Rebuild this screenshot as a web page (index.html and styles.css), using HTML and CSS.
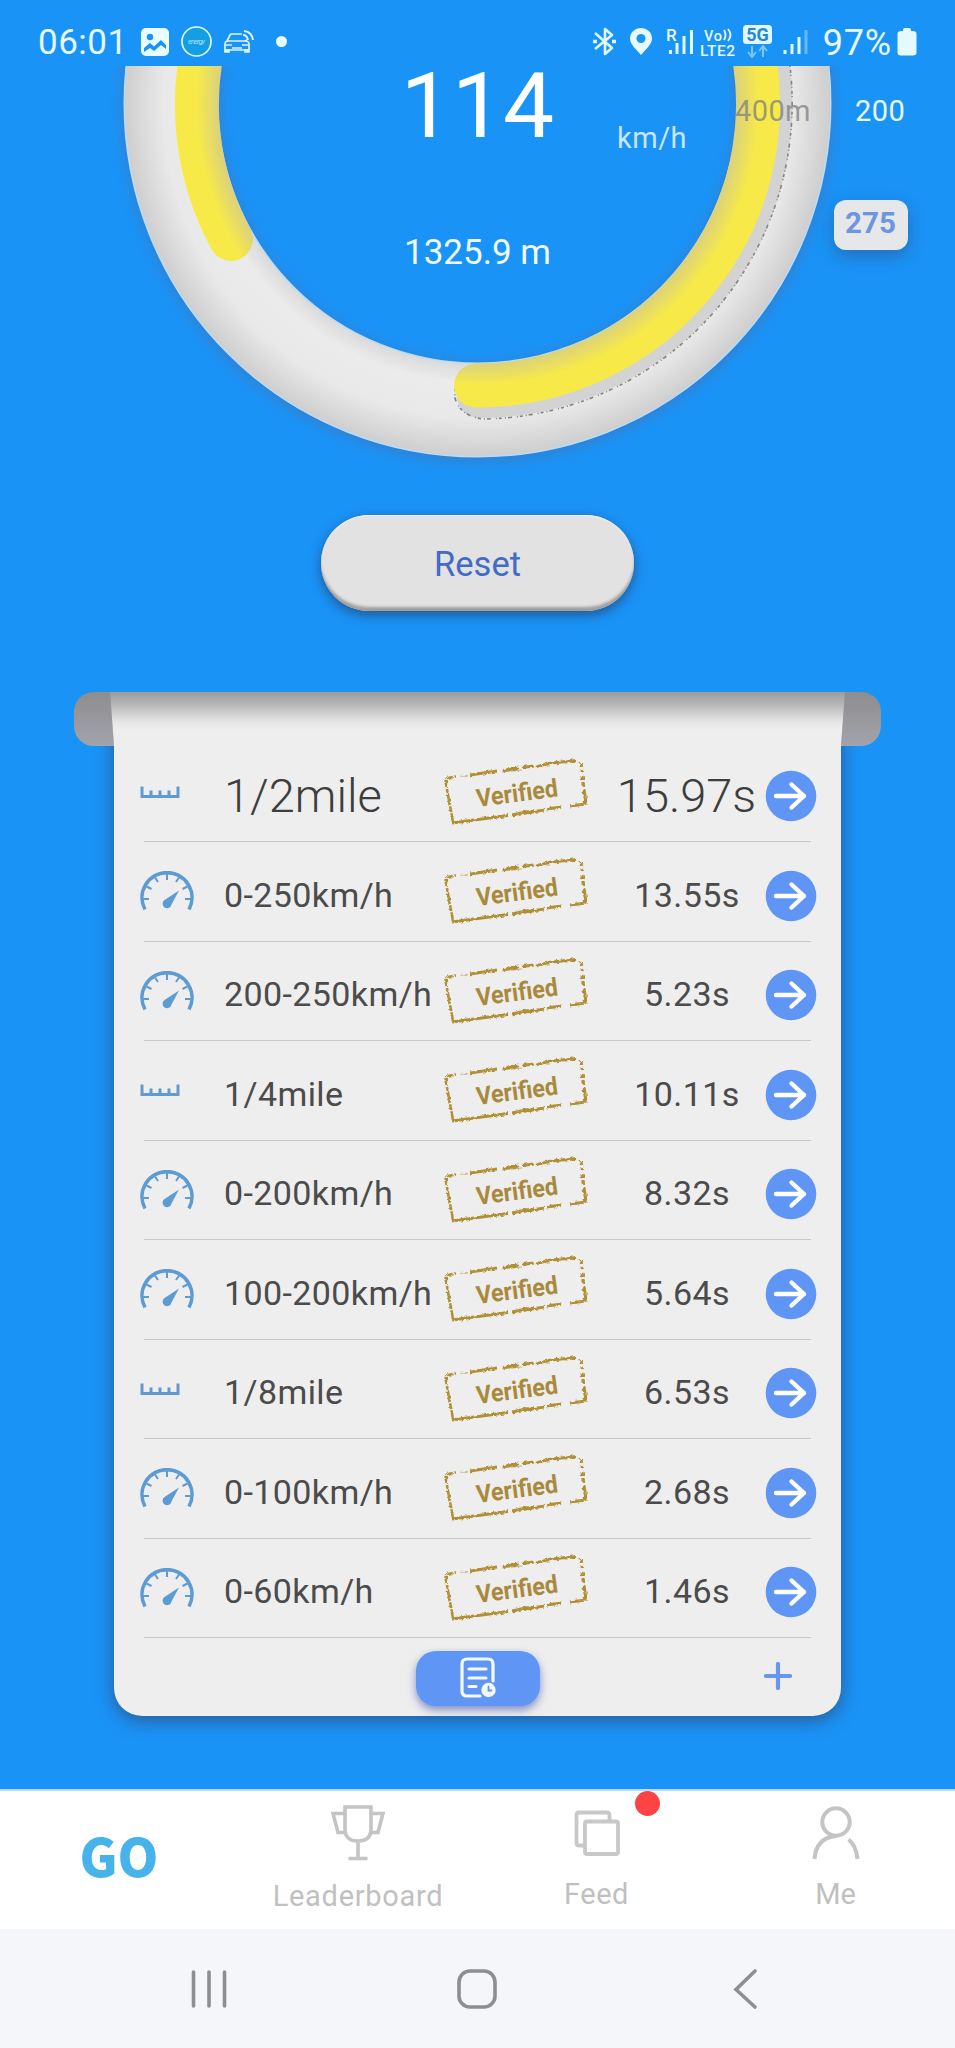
FILE: index.html
```
<!DOCTYPE html>
<html lang="en">
<head>
<meta charset="UTF-8">
<title>GO</title>
<link rel="stylesheet" href="styles.css">
</head>
<body>
<div class="statusbar">
  <span class="clock">06:01</span>
  <svg class="st-image" width="28" height="28" viewBox="0 0 28 28"><rect width="28" height="28" rx="5" fill="#e9fcff"/><circle cx="9" cy="9" r="3.200" fill="#1a93f7"/><path d="M3 20l6-5 4 3.500 7-6.500 5 5v4l-5-4-7 6-4-3-6 4z" fill="#1a93f7"/></svg>
  <svg class="st-app" width="31" height="31" viewBox="0 0 31 31"><circle cx="15.500" cy="15.500" r="14.500" fill="#149fe4" stroke="#dff8ff" stroke-width="1.700"/><text x="15.500" y="18" font-size="7.500" font-style="italic" textLength="17" text-anchor="middle" fill="#a9e0fa">energy</text></svg>
  <svg class="st-car" width="31" height="24" viewBox="0 0 31 24" fill="none" stroke="#dcf5ff" stroke-width="1.700"><path d="M4 11l3-6q.5-1 2-1h10M22 11l2-1M2 20v-6q0-3 3-3h17q4 0 4 3v6zM6 11h15M3 15h6M19 15h6M9 18h10"/><path d="M2 20h4v2H2zM22 20h4v2h-4z" fill="#dcf5ff"/><path d="M20 5q4 0 5 5M21 1q8 1 9 9" stroke-width="2"/></svg>
  <span class="st-dot"></span>
  <svg class="st-bt" width="25" height="29" viewBox="0 0 25 29" fill="none" stroke="#e2f8ff" stroke-width="2.600" stroke-linejoin="round"><path d="M3 6l17 15-7 6V2l7 6L3 22"/><path d="M1 14.500h4M20 14.500h4" stroke-width="3.500"/></svg>
  <svg class="st-pin" width="22" height="27" viewBox="0 0 22 27"><path d="M11 27C5 20 0 16 0 10.500a11 10.500 0 0 1 22 0C22 16 17 20 11 27z" fill="#e6f9ff"/><circle cx="11" cy="10.500" r="4.500" fill="#1a93f7"/></svg>
  <svg class="st-sig" width="28" height="29" viewBox="0 0 28 29" stroke="#e2f8ff" stroke-width="3"><path d="M4.500 23v4M11 16v11M18 9v18M25.500 3v24"/><text x="0" y="13.500" font-size="17" font-weight="500" stroke="none" fill="#e2f8ff">R</text></svg>
  <svg class="st-lte" width="36" height="30" viewBox="0 0 36 30" fill="#e2f8ff"><text x="4" y="13.500" font-size="14.500" font-weight="500" textLength="18">Vo</text><path d="M24 3q3 5 0 10M28 2q5 6 0 12" fill="none" stroke="#e2f8ff" stroke-width="1.900"/><text x="0" y="28.500" font-size="15.500" font-weight="500" textLength="35">LTE2</text></svg>
  <svg class="st-5g" width="29" height="34" viewBox="0 0 29 34"><rect width="29" height="19" rx="3.500" fill="#e2f8ff"/><text x="14.500" y="16" font-size="18" font-weight="700" text-anchor="middle" fill="#2588d6">5G</text><path d="M9 21v10M5 27l4 5 4-5M20 32V22M16 26l4-5 4 5" fill="none" stroke="#7cc6fb" stroke-width="2"/></svg>
  <svg class="st-sig2" width="25" height="29" viewBox="0 0 25 29" stroke="#e2f8ff" stroke-width="3"><path d="M2 23v4M9 17v10M16 10v17"/><path d="M23 3v24" stroke="#67b8fa"/></svg>
  <span class="percent">97%</span>
  <svg class="st-bat" width="20" height="28" viewBox="0 0 20 28"><path d="M6 2q0-2 2-2h4q2 0 2 2v1h2q3.500 0 3.500 3v18.500q0 3-3.500 3H4q-3.500 0-3.500-3V6q0-3 3.500-3h2z" fill="#e6f9ff"/></svg>
</div>

<!-- speed dial, coordinates are screen coordinates -->
<svg class="dial" width="955" height="420" viewBox="0 66 955 420">
  <defs>
    <radialGradient id="ring" gradientUnits="userSpaceOnUse" cx="477.500" cy="104" r="353">
      <stop offset=".735" stop-color="#dadada"/>
      <stop offset=".79" stop-color="#ebebeb"/>
      <stop offset=".89" stop-color="#e9e9e9"/>
      <stop offset="1" stop-color="#cecece"/>
    </radialGradient>
    <radialGradient id="arc" gradientUnits="userSpaceOnUse" cx="477.500" cy="104" r="303">
      <stop offset=".855" stop-color="#dbd17c"/>
      <stop offset=".93" stop-color="#f7ea48"/>
    </radialGradient>
    <filter id="blur" x="-10%" y="-10%" width="120%" height="120%"><feGaussianBlur stdDeviation="8"/></filter>
    <filter id="soft" x="-50%" y="-50%" width="200%" height="200%"><feGaussianBlur stdDeviation="9"/></filter>
  </defs>
  <circle cx="477.500" cy="106" r="306.500" fill="none" stroke="#4a6fa8" stroke-opacity=".65" stroke-width="94" filter="url(#blur)"/>
  <circle cx="477.500" cy="103.500" r="306.500" fill="none" stroke="#b9dcf8" stroke-width="95"/>
  <circle cx="477.500" cy="103.500" r="306.500" fill="none" stroke="url(#ring)" stroke-width="92"/>
  <path class="arc-shadow" d="M768 66A292 292 0 0 1 479 396"/>
  <path class="arc-noise" d="M790 66A313 316 0 0 1 483 419Q460 416 455 398V384"/>
  <path class="arc" d="M207 30A281 281 0 0 0 231 239"/>
  <path class="arc" d="M748 30A281 281 0 0 1 476 385.500"/>
  <text class="speed" x="477.500" y="137">114</text>
  <text class="unit" x="617" y="147.500">km/h</text>
  <text class="distance" x="477.500" y="264">1325.9 m</text>
  <text class="mark" x="735" y="121">400m</text>
  <text class="tick" x="855" y="121">200</text>
  <rect x="834" y="206" width="74" height="50" rx="12" fill="#24548f" fill-opacity=".6" filter="url(#soft)"/>
  <rect x="834" y="200" width="74" height="50" rx="12" fill="#e6e7e9"/>
  <text class="badge" x="870.500" y="233">275</text>
</svg>

<button class="reset">Reset</button>

<div class="sheet">
  <div class="roll"></div>
  <div class="paper">
    <ul class="results" id="results"></ul>
    <div class="paper-foot">
      <button class="history">
        <svg width="36" height="42" viewBox="0 0 36 42" fill="none" stroke="#f4faff" stroke-width="3.200" stroke-linecap="round"><path d="M20 39H7q-5 0-5-5V7q0-5 5-5h21q5 0 5 5v17"/><path d="M9 12h17M9 21h17M9 29.500h7"/><circle cx="28.500" cy="33" r="7.200" fill="#f4faff" stroke="none"/><path d="M28.500 29.500v4h3" stroke="#5f96f5" stroke-width="1.800"/></svg>
      </button>
      <svg class="plus" width="28" height="28" viewBox="0 0 28 28"><path d="M14 2v24M2 14h24" stroke="#6796ea" stroke-width="4.200" stroke-linecap="round"/></svg>
    </div>
  </div>
</div>

<div class="tabs">
  <div class="tab go">GO</div>
  <div class="tab leaderboard">
    <svg width="54" height="56" viewBox="0 0 54 56" fill="none" stroke="#c4c4c4" stroke-width="3.600"><path d="M14 2h26v22q0 12-13 12T14 24zM27 36v17M17.500 53.500h19M14 8.500H2l5 19h7M40 8.500h12l-5 19h-7"/></svg>
    <span>Leaderboard</span>
  </div>
  <div class="tab feed">
    <svg width="46" height="46" viewBox="0 0 46 46" fill="none" stroke="#c8c8c8" stroke-width="3.800"><path d="M35.500 10V5q0-2.500-2.500-2.500H4.500Q2.500 2.500 2.500 5v28q0 2.500 2.500 2.500h5"/><rect x="11" y="11.500" width="33" height="32.500" rx="2"/></svg>
    <span>Feed</span>
    <i class="dot"></i>
  </div>
  <div class="tab me">
    <svg width="48" height="54" viewBox="0 0 48 54" fill="none" stroke="#c4c4c4" stroke-width="4"><circle cx="24" cy="16" r="13.700"/><path d="M24 30Q4 32 2.500 53M36.500 33.500Q44 39 45.500 53"/></svg>
    <span>Me</span>
  </div>
</div>

<div class="navbar">
  <svg class="recents" width="36" height="40" viewBox="0 0 36 40"><path d="M2.500 3v34M18 3v34M33.500 3v34"/></svg>
  <svg class="home" width="40" height="40" viewBox="0 0 40 40"><rect x="2" y="2" width="36" height="36" rx="11"/></svg>
  <svg class="back" width="24" height="40" viewBox="0 0 24 40"><path d="M22 2L3 20.500 22 38"/></svg>
</div>

<svg class="sprite" width="0" height="0">
  <filter id="rough" x="-5%" y="-5%" width="110%" height="110%"><feTurbulence type="fractalNoise" baseFrequency=".35" numOctaves="2" seed="4"/><feDisplacementMap in="SourceGraphic" scale="3.500" xChannelSelector="R" yChannelSelector="G"/></filter>
  <symbol id="ruler" viewBox="0 0 54 40"><path d="M2 14.500v10h36v-10M11 24v-5.500M20 24v-5.500M29 24v-5.500" fill="none" stroke="#5f9bd0" stroke-width="3"/></symbol>
  <symbol id="meter" viewBox="0 0 54 40"><g fill="none" stroke="#5d9bd3"><path d="M5 38.500A25 25 0 1 1 49 38.500" stroke-width="3.600"/><path d="M27 3v6M15 6.500l3 4.500M39 6.500l-3 4.500M6.500 15.500l5 2.500M47.500 15.500l-5 2.500M3 28h6M45 28h6" stroke-width="2"/></g><path d="M39 19.500L31.500 33.500A4.500 4.500 0 1 1 24.500 29z" fill="#5d9bd3"/></symbol>
  <symbol id="stamp" viewBox="0 0 144 68">
    <g fill="none" stroke="#b08f35" filter="url(#rough)">
      <path d="M9 64L2 26Q.500 20 5 19.500L12 18.500" stroke-width="2.600" stroke-dasharray="9 1 6 1.500 12 1 3 1"/>
      <path d="M16 18.500l8-1" stroke-width="1.500" stroke-opacity=".5"/>
      <path d="M26 17L53 13M59 12.500l16-2.500M78 9.500l12-1.500M92 9l12-3.500M104 5.500l18-2M122 4l10-1.500" stroke-width="2.800"/>
      <path d="M58 14l20-2M94 7l12 1M110 3.500l22 0" stroke-width="1.200" stroke-opacity=".7"/>
      <path d="M137 5l1.500 9M138 18l3.500 24Q142 46 138 46.500L126 48" stroke-width="3.200" stroke-dasharray="4 2 5 3 80"/>
      <path d="M8 65L64 57.500M68 57l16-3.500M82 55l18-3M103 51l15-2" stroke-width="3.200"/>
    </g>
    <text x="33.500" y="49" transform="rotate(-7.500 33.500 49)" font-size="25" font-weight="700" textLength="82" lengthAdjust="spacingAndGlyphs" fill="#a9893c">Verified</text>
  </symbol>
  <symbol id="go" viewBox="0 0 52 52"><circle cx="26" cy="26" r="25.300" fill="#5f96f5"/><path d="M11 26h28M26.500 14.500L39 26 26.500 37.500" fill="none" stroke="#fff" stroke-width="4.400" stroke-linecap="round" stroke-linejoin="round"/></symbol>
</svg>

<script>
const results = [
  ['ruler', '1/2mile', '15.97s'],
  ['meter', '0-250km/h', '13.55s'],
  ['meter', '200-250km/h', '5.23s'],
  ['ruler', '1/4mile', '10.11s'],
  ['meter', '0-200km/h', '8.32s'],
  ['meter', '100-200km/h', '5.64s'],
  ['ruler', '1/8mile', '6.53s'],
  ['meter', '0-100km/h', '2.68s'],
  ['meter', '0-60km/h', '1.46s']
];

document.getElementById('results').innerHTML = results.map(([icon, name, time]) => `
  <li class="result">
    <svg class="kind"><use href="#${icon}"/></svg>
    <span class="name">${name}</span>
    <svg class="stamp"><use href="#stamp"/></svg>
    <span class="time">${time}</span>
    <svg class="open"><use href="#go"/></svg>
  </li>`).join('');
</script>
</body>
</html>
```
FILE: styles.css
```
* { box-sizing: border-box; }
body { margin: 0; width: 955px; height: 2048px; overflow: hidden; background: #1a93f7; font-family: Roboto, sans-serif; display: flex; flex-direction: column; }
svg { display: block; flex-shrink: 0; }
button { border: 0; padding: 0; font-family: inherit; }

.statusbar { height: 66px; padding: 17px 38px 0 38px; display: flex; align-items: center; color: #e6f9ff; flex-shrink: 0; }
.statusbar svg { overflow: visible; }
.clock, .percent { line-height: 48px; padding-top: 2px; }
.clock { font-size: 35px; width: 103px; letter-spacing: .5px; }
.st-app { margin-left: 12px; }
.st-car { margin-left: 11px; }
.st-dot { width: 11px; height: 11px; border-radius: 50%; background: #e9fcff; margin-left: 22px; }
.st-bt { margin-left: 305px; }
.st-pin { margin-left: 13px; }
.st-sig { margin-left: 14px; }
.st-lte { margin-left: 6px; }
.st-5g { margin-left: 7px; }
.st-sig2 { margin-left: 11px; }
.percent { margin-left: auto; font-size: 36px; letter-spacing: .8px; }
.st-bat { margin-left: 5px; }

.dial text { font-family: Roboto, sans-serif; fill: #fff; }
.arc { fill: none; stroke: url(#arc); stroke-width: 44; stroke-linecap: round; }
.arc-shadow { fill: none; stroke: #d3d3d3; stroke-width: 44; stroke-linecap: round; }
.arc-noise { fill: none; stroke: #858585; stroke-width: 1.6; stroke-dasharray: 1 3 3 2 1 5 4 2; }
.dial .speed { font-size: 91px; text-anchor: middle; }
.dial .unit { font-size: 29px; fill: #c9e6fd; letter-spacing: .5px; }
.dial .distance { font-size: 35px; text-anchor: middle; fill: #effaff; }
.dial .mark { font-size: 29px; fill: #7f7f7f; fill-opacity: .75; letter-spacing: .4px; }
.dial .tick { font-size: 29px; fill: #e9f7ff; letter-spacing: .4px; }
.dial .badge { font-size: 29.5px; font-weight: 700; text-anchor: middle; fill: #6c95e2; }

.reset { width: 313px; height: 96px; margin: 29px auto 0; flex-shrink: 0; border-radius: 48px; background: #e2e2e2; color: #426bc8; font-size: 34.5px; padding-top: 2px; box-shadow: inset 0 -5px 3px -1px #a19e9c, inset 0 1px 1px #f2f2f2, 0 4px 12px rgba(40, 60, 100, .7); }

.sheet { width: 807px; margin: 81px auto 0; flex-shrink: 0; display: grid; justify-items: center; }
.roll, .paper { grid-area: 1 / 1; }
.roll { width: 807px; height: 54px; border-radius: 20px; background: linear-gradient(#8d8d8d, #a3a3ad); }
.paper { position: relative; width: 727px; height: 1024px; padding-top: 50.5px; border-radius: 0 0 28px 28px; background: #eee; box-shadow: 0 4px 18px rgba(50, 70, 110, .75); clip-path: polygon(-4px 0, 731px 0, 727px 54px, 770px 54px, 770px 1080px, -40px 1080px, -40px 54px, 0 54px); }
/* curled top edge, wider than the paper itself */
.paper::before { content: ""; position: absolute; top: 0; left: -4px; right: -4px; height: 54px; background: linear-gradient(#9c9c9c, #b0b0b0 10px, #d0d0d0 22px, #e6e6e6 30px, #eee 38px); }
.results { position: relative; list-style: none; margin: 0; padding: 0; }
.result { height: 99.5px; margin: 0 30px; border-bottom: 1px solid #c9c9cb; display: grid; grid-template-columns: 80px 221px 164px 156px 52px; align-items: center; font-size: 34px; letter-spacing: .4px; color: #4b4b4b; white-space: nowrap; }
.kind { width: 54px; height: 40px; margin-left: -4px; }
.name { padding-top: 7px; }
.stamp { width: 144px; height: 68px; margin-left: -1px; letter-spacing: 0; }
.time { padding-top: 7px; text-align: center; }
.open { width: 52px; height: 52px; margin-top: 9px; }
.result:first-child { font-size: 47px; font-weight: 300; letter-spacing: 0; color: #3d3d3d; }
.result:first-child .time { margin-left: -1px; }
.paper-foot { height: 78px; display: flex; align-items: center; padding-left: 302px; }
.history { width: 124px; height: 55px; margin-top: 2px; border-radius: 20px; background: #5f96f5; display: flex; align-items: center; justify-content: center; box-shadow: 0 4px 8px rgba(70, 90, 180, .65); }
.plus { margin: -2px 0 0 224px; }

.tabs { height: 140px; margin-top: 73px; flex-shrink: 0; background: #fff; border-top: 2px solid #b9dcf5; display: grid; grid-template-columns: 238px 239px 239px 239px; font-size: 29px; color: #c0c0c0; }
.tab { position: relative; display: flex; flex-direction: column; align-items: center; }
.tab span { line-height: 34px; }
.go { justify-content: center; padding-bottom: 12px; color: #47b3ea; font: 900 52px "Noto Sans CJK SC", sans-serif; }
.leaderboard { padding-top: 14px; }
.leaderboard span { margin: 18px 0 0 1px; letter-spacing: .7px; }
.feed { padding-top: 19px; }
.feed span { margin-top: 21px; letter-spacing: .5px; }
.me { padding-top: 15px; }
.me span { margin-top: 17px; }
.dot { position: absolute; top: 0; left: 158px; width: 25px; height: 25px; border-radius: 50%; background: #fd4344; }

.navbar { height: 119px; flex-shrink: 0; background: #f5f6f9; display: flex; align-items: center; padding-left: 191px; }
.navbar svg { fill: none; stroke: #8e8e90; stroke-width: 3.6; stroke-linecap: round; }
.home { margin-left: 230px; }
.back { margin-left: 236px; }
.sprite { position: absolute; }
```
